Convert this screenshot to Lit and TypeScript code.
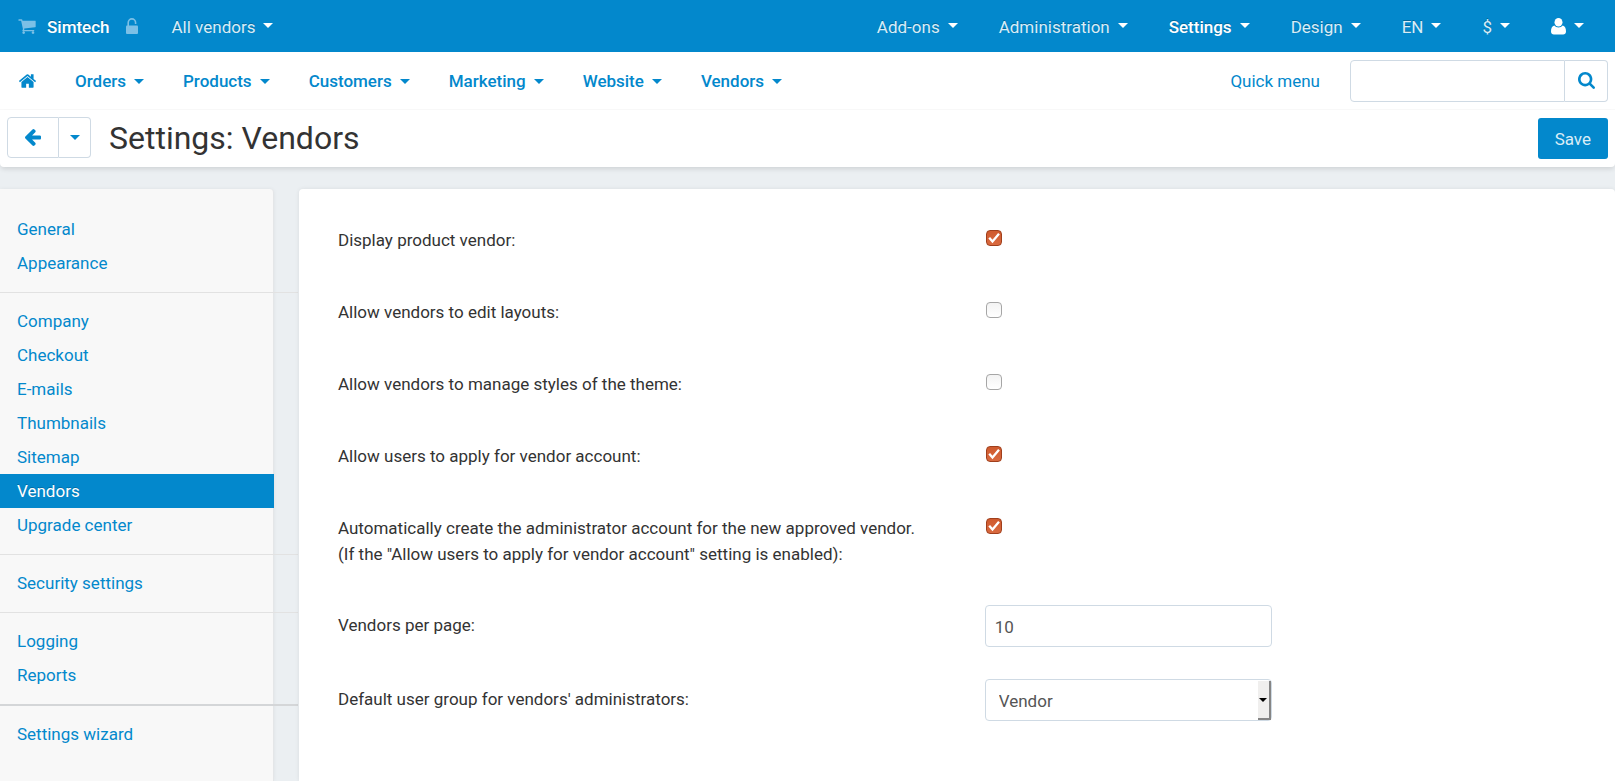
import { LitElement, html, css, svg, nothing } from "lit";
import { customElement, state } from "lit/decorators.js";

const icons = {
  cart: svg`<svg class="icon cart" viewBox="0 0 1664 1536" width="18" height="16" aria-hidden="true"><path d="M640 1408q0 52-38 90t-90 38-90-38-38-90 38-90 90-38 90 38 38 90zm896 0q0 52-38 90t-90 38-90-38-38-90 38-90 90-38 90 38 38 90zm128-1088v512q0 24-16.500 42.500t-40.500 21.500l-1044 122q13 60 13 70 0 16-24 64h920q26 0 45 19t19 45-19 45-45 19h-1024q-26 0-45-19t-19-45q0-11 8-31.500t16-36 21.500-40 15.500-29.500l-177-823h-204q-26 0-45-19t-19-45 19-45 45-19h256q16 0 28.500 6.500t19.500 15.500 13 24.500 8 26 5.500 29.500 4.500 26h1201q26 0 45 19t19 45z"/></svg>`,
  unlock: svg`<svg class="icon lock" viewBox="0 0 12 16" width="12" height="16" aria-hidden="true"><path d="M2.200 8V4.700a3.700 3.800 0 0 1 7.400 0v1.300" fill="none" stroke="currentColor" stroke-width="1.600"/><rect y="7.500" width="12" height="8.500" rx="1"/></svg>`,
  user: svg`<svg class="icon" viewBox="0 0 15 17" width="15" height="17" aria-hidden="true"><ellipse cx="7.500" cy="4.300" rx="4" ry="4.300"/><path d="M3.300 7.500C1 7.800 0 10.500 0 13.500 0 15.300 1.200 16.500 2.900 16.500h9.200c1.700 0 2.900-1.200 2.900-3 0-3-1-5.700-3.300-6-1 1.200-2.500 2-4.200 2s-3.200-.8-4.200-2z"/></svg>`,
  home: svg`<svg class="icon" viewBox="0 0 1612 1283" width="17" height="14" aria-hidden="true"><path d="M1382 739v480q0 26-19 45t-45 19H934V899H678v384H294q-26 0-45-19t-19-45V739q0-1 .5-3t.5-3l575-474 575 474q1 2 1 6zm223-69l-62 74q-8 9-21 11h-3q-13 0-21-7L806 171 114 748q-12 8-24 7-13-2-21-11L7 670q-8-10-7-23.500T11 625L730 26q32-26 76-26t76 26l244 204V35q0-14 9-23t23-9h192q14 0 23 9t9 23v408l219 182q10 8 11 21.500t-7 23.500z"/></svg>`,
  search: svg`<svg class="icon" viewBox="0 0 1664 1664" width="17" height="17" aria-hidden="true"><path d="M1152 704q0-185-131.500-316.500T704 256 387.500 387.500 256 704t131.500 316.500T704 1152t316.500-131.500T1152 704zm512 832q0 52-38 90t-90 38q-54 0-90-38l-343-342q-179 124-399 124-143 0-273.500-55.500t-225-150-150-225T0 704t55.500-273.500 150-225 225-150T704 0t273.500 55.500 225 150 150 225T1408 704q0 220-124 399l343 343q37 37 37 90z"/></svg>`,
  back: svg`<svg class="icon" viewBox="0 0 1472 1558" width="16" height="17" aria-hidden="true"><path d="M1472 779v128q0 53-32.500 90.500T1355 1035H651l293 294q38 36 38 90t-38 90l-75 76q-37 37-90 37-52 0-91-37L37 933Q0 896 0 843q0-52 37-91L688 102q38-38 91-38 52 0 90 38l75 74q38 38 38 91t-38 91L651 651h704q52 0 84.500 37.500T1472 779z" transform="translate(0 -64)"/></svg>`,
};

const caret = svg`<svg class="caret" viewBox="0 0 10 5" width="10" height="5" aria-hidden="true"><path d="M0 0h10L5 5z"/></svg>`;

interface TopItem { label: string; active?: boolean; }

const topMenu: TopItem[] = [
  { label: "Add-ons" },
  { label: "Administration" },
  { label: "Settings", active: true },
  { label: "Design" },
  { label: "EN" },
  { label: "$" },
];

const mainMenu = ["Orders", "Products", "Customers", "Marketing", "Website", "Vendors"];

const sections = [
  ["General", "Appearance"],
  ["Company", "Checkout", "E-mails", "Thumbnails", "Sitemap", "Vendors", "Upgrade center"],
  ["Security settings"],
  ["Logging", "Reports"],
  ["Settings wizard"],
];

const toggles = [
  { id: "display_vendor", lines: ["Display product vendor:"], on: true },
  { id: "edit_layouts", lines: ["Allow vendors to edit layouts:"], on: false },
  { id: "manage_styles", lines: ["Allow vendors to manage styles of the theme:"], on: false },
  { id: "apply_vendor", lines: ["Allow users to apply for vendor account:"], on: true },
  {
    id: "create_admin",
    lines: [
      "Automatically create the administrator account for the new approved vendor.",
      "(If the \"Allow users to apply for vendor account\" setting is enabled):",
    ],
    on: true,
  },
];

@customElement("app-root")
export class AppRoot extends LitElement {
  @state() private current = "Vendors";

  static styles = css`
    :host {
      display: flex;
      flex-direction: column;
      min-height: 100vh;
      background: #ebeff2;
      color: #333;
      font: 17px/26px Roboto, "Liberation Sans", sans-serif;
    }
    *, *::before, *::after { box-sizing: border-box; }
    a { color: #0388cc; text-decoration: none; }
    ul { list-style: none; margin: 0; padding: 0; }
    button, input, select { font: inherit; margin: 0; }
    button { cursor: pointer; }
    .icon, .caret { fill: currentColor; display: block; flex: none; }

    .topbar {
      display: flex;
      align-items: center;
      justify-content: space-between;
      height: 52px;
      padding: 2px 31px 0 18px;
      background: #0388cc;
    }
    .topbar a { color: #d9edf7; text-shadow: 0 -1px 0 rgba(0, 0, 0, 0.25); }
    .topbar a.strong { color: #fff; font-weight: 500; }
    .brand { display: flex; align-items: center; }
    .brand .cart, .brand .lock { color: #7cc0e6; }
    .brand .name { margin: 0 16px 0 11px; }
    .brand .lock { margin-bottom: 4px; }
    .brand .vendors { margin-left: 34px; }
    .menu { display: flex; align-items: center; gap: 39px; }
    .topbar .menu { gap: 41px; }
    .drop { display: flex; align-items: center; gap: 8px; }
    .topbar .caret { color: #fff; margin-bottom: 4px; }
    .topbar .icon { margin-bottom: 2px; }
    .topbar .drop > .icon { color: #fff; }

    .navbar {
      display: flex;
      align-items: center;
      justify-content: space-between;
      height: 58px;
      padding: 0 7px 0 19px;
      background: #fff;
      border-bottom: 1px solid #f9f9f9;
    }
    .navbar .menu a { font-weight: 500; }
    .navbar .caret { margin-top: 2px; }
    .quick { display: flex; align-items: center; gap: 30px; }
    .search { display: flex; height: 42px; }
    .search input {
      width: 215px;
      border: 1px solid #cfdae4;
      border-radius: 4px 0 0 4px;
      padding: 0 9px;
      background: #fff;
    }
    .search button {
      display: flex;
      align-items: center;
      justify-content: center;
      width: 43px;
      padding: 0;
      border: 1px solid #cfdae4;
      border-left: 0;
      border-radius: 0 4px 4px 0;
      background: #fff;
      color: #0388cc;
    }

    .actions {
      display: flex;
      align-items: center;
      height: 57px;
      padding: 0 7px 2px;
      background: #fff;
      border-radius: 0 0 4px 4px;
      box-shadow: 0 3px 5px -1px rgba(0, 0, 0, 0.12);
    }
    .split { display: flex; height: 41px; }
    .split button {
      display: flex;
      align-items: center;
      justify-content: center;
      padding: 0;
      background: #fff;
      border: 1px solid #cfdae4;
      color: #0388cc;
    }
    .split .go { width: 52px; border-radius: 4px 0 0 4px; }
    .split .more { width: 32px; border-left: 0; border-radius: 0 4px 4px 0; }
    h1 { flex: 1; margin: 0 0 0 18px; font-size: 32px; line-height: 40px; font-weight: 400; }
    .save {
      height: 41px;
      margin-top: 2px;
      padding: 0 17px;
      border: 0;
      border-radius: 3px;
      background: #0388cc;
      color: #d9edf7;
    }

    .page {
      flex: 1;
      display: grid;
      grid-template-columns: 274px minmax(0, 1fr);
      column-gap: 25px;
      padding-top: 22px;
    }
    .side {
      padding: 23px 0;
      background: #f8f8f8;
      border-right: 1px solid #e4e6e8;
      border-radius: 0 4px 0 0;
      box-shadow: 0 0 4px rgba(0, 0, 0, 0.06);
    }
    .side ul + ul::before {
      content: "";
      display: block;
      height: 1px;
      margin: 12px -25px 11px 0;
      background: #e2e2e2;
    }
    .side ul:last-child::before { height: 2px; background: #d4d6d8; }
    .side a { display: block; padding: 4px 17px; }
    .side a.current {
      margin-right: -1px;
      background: #0388cc;
      color: #fff;
      text-shadow: 0 -1px 0 rgba(0, 0, 0, 0.2);
    }
    .panel {
      display: flex;
      flex-direction: column;
      gap: 32px;
      padding: 31px 39px;
      background: #fff;
      border-radius: 4px 4px 0 0;
      box-shadow: 0 0 4px rgba(0, 0, 0, 0.08);
    }
    .row {
      display: grid;
      grid-template-columns: 52% 1fr;
      align-items: start;
      min-height: 40px;
    }
    .row label { padding: 7px 0 6px; }
    .line { display: block; }
    .tick {
      appearance: none;
      width: 16px;
      height: 16px;
      margin: 10px 0 0 4px;
      border: 1px solid #a6a6a6;
      border-radius: 4px;
      background: linear-gradient(#f3f3f3, #fff);
    }
    .tick:checked {
      border-color: #a03f1c;
      background:
        url("data:image/svg+xml,%3Csvg xmlns='http://www.w3.org/2000/svg' viewBox='0 0 14 14'%3E%3Cpath d='M2.200 6.800l3.300 3.800L12 2.800' fill='none' stroke='white' stroke-width='2.300'/%3E%3C/svg%3E") center / 14px 14px no-repeat,
        linear-gradient(#cf5a2e, #d96a40);
    }
    .field {
      width: 287px;
      height: 42px;
      margin-left: 3px;
      border: 1px solid #cfdae4;
      border-radius: 4px;
      padding: 2px 9px 0;
      background: #fff;
      color: #555;
    }
    .pick { position: relative; width: 290px; }
    .pick select { appearance: none; padding: 2px 13px 0; }
    .pick .knob {
      position: absolute;
      top: 2px;
      right: 1px;
      display: flex;
      align-items: center;
      justify-content: center;
      width: 13px;
      height: 39px;
      background: #f0efee;
      border-right: 2px solid #858585;
      border-bottom: 2px solid #858585;
      color: #000;
      pointer-events: none;
    }
    .pick .caret { width: 8px; height: 4px; }
  `;

  private choose(e: Event, name: string) {
    e.preventDefault();
    this.current = name;
  }

  render() {
    return html`
      <header class="topbar">
        <div class="brand">
          ${icons.cart}
          <a class="name strong" href="#">Simtech</a>
          ${icons.unlock}
          <a class="drop vendors" href="#">All vendors ${caret}</a>
        </div>
        <nav class="menu">
          ${topMenu.map((m) => html`<a class="drop ${m.active ? "strong" : ""}" href="#">${m.label} ${caret}</a>`)}
          <a class="drop" href="#" aria-label="Account">${icons.user} ${caret}</a>
        </nav>
      </header>
      <div class="navbar">
        <nav class="menu">
          <a href="#" aria-label="Home">${icons.home}</a>
          ${mainMenu.map((m) => html`<a class="drop" href="#">${m} ${caret}</a>`)}
        </nav>
        <div class="quick">
          <a href="#">Quick menu</a>
          <form class="search" role="search" @submit=${(e: Event) => e.preventDefault()}>
            <input type="text" aria-label="Search" />
            <button aria-label="Search">${icons.search}</button>
          </form>
        </div>
      </div>
      <div class="actions">
        <div class="split">
          <button class="go" aria-label="Back">${icons.back}</button>
          <button class="more" aria-label="Recent pages">${caret}</button>
        </div>
        <h1>Settings: Vendors</h1>
        <button class="save">Save</button>
      </div>
      <div class="page">
        <nav class="side">
          ${sections.map((items) => html`<ul>
            ${items.map((name) => html`<li><a href="#" class=${name === this.current ? "current" : nothing}
              @click=${(e: Event) => this.choose(e, name)}>${name}</a></li>`)}
          </ul>`)}
        </nav>
        <main class="panel">
          ${toggles.map((t) => html`<div class="row">
            <label for=${t.id}>${t.lines.map((l) => html`<span class="line">${l}</span>`)}</label>
            <input class="tick" type="checkbox" id=${t.id} ?checked=${t.on} />
          </div>`)}
          <div class="row">
            <label for="per_page">Vendors per page:</label>
            <input class="field" type="text" id="per_page" value="10" />
          </div>
          <div class="row">
            <label for="group">Default user group for vendors' administrators:</label>
            <div class="pick">
              <select class="field" id="group"><option>Vendor</option></select>
              <span class="knob">${caret}</span>
            </div>
          </div>
        </main>
      </div>
    `;
  }
}
